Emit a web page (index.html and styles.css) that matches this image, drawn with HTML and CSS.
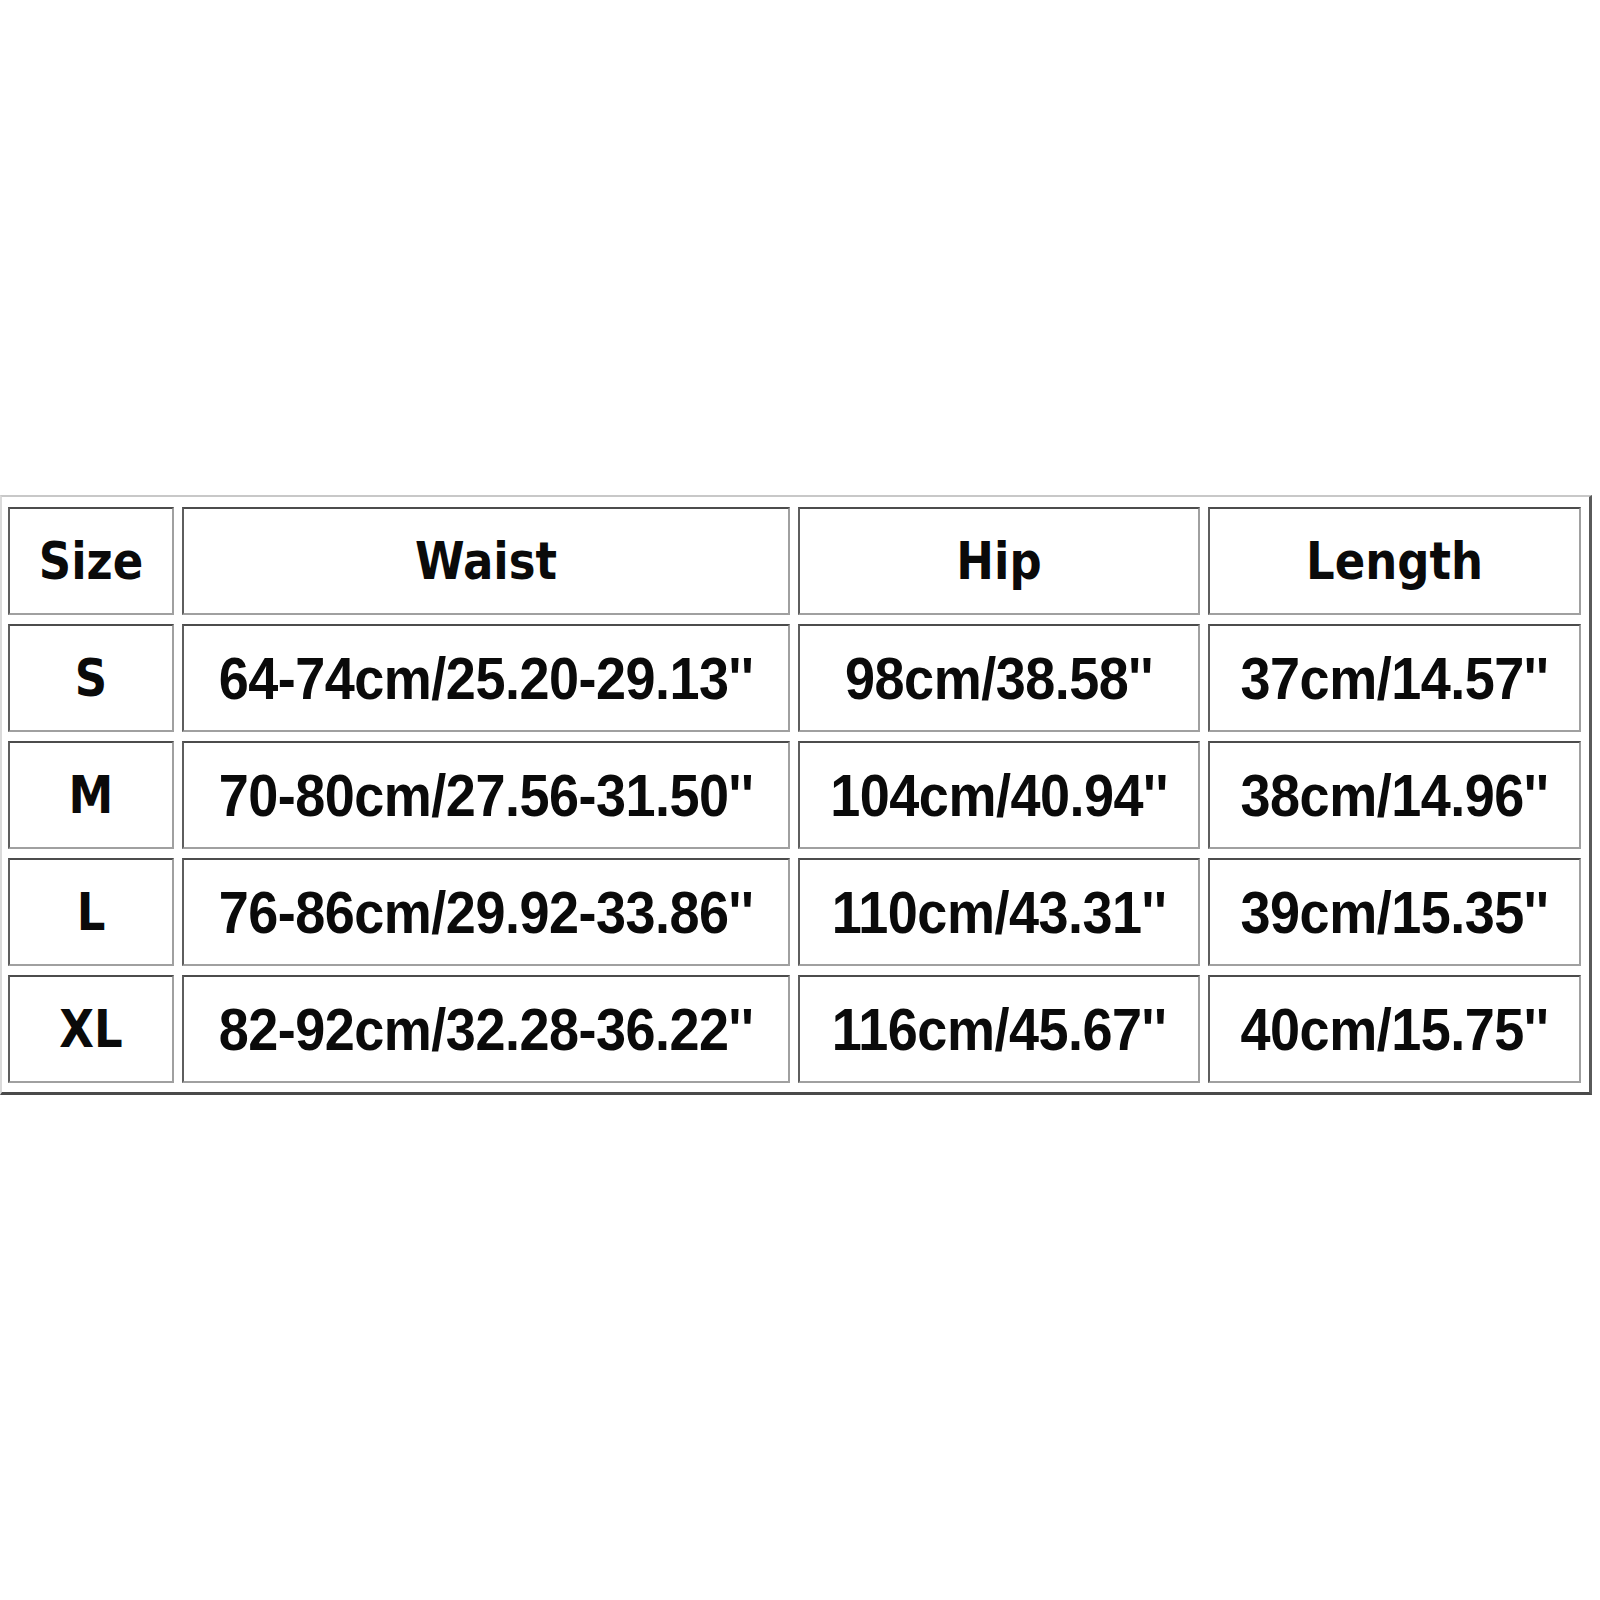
FILE: index.html
```html
<!DOCTYPE html>
<html>
<head>
<meta charset="utf-8">
<link rel="stylesheet" href="styles.css">
</head>
<body>
<div class="page">
  <div class="chart">
    <div class="cell head"><span>Size</span></div>
    <div class="cell head"><span>Waist</span></div>
    <div class="cell head"><span>Hip</span></div>
    <div class="cell head"><span>Length</span></div>

    <div class="cell head"><span>S</span></div>
    <div class="cell"><span>64-74cm/25.20-29.13''</span></div>
    <div class="cell"><span>98cm/38.58''</span></div>
    <div class="cell"><span>37cm/14.57''</span></div>

    <div class="cell head"><span>M</span></div>
    <div class="cell"><span>70-80cm/27.56-31.50''</span></div>
    <div class="cell"><span>104cm/40.94''</span></div>
    <div class="cell"><span>38cm/14.96''</span></div>

    <div class="cell head"><span>L</span></div>
    <div class="cell"><span>76-86cm/29.92-33.86''</span></div>
    <div class="cell"><span>110cm/43.31''</span></div>
    <div class="cell"><span>39cm/15.35''</span></div>

    <div class="cell head"><span>XL</span></div>
    <div class="cell"><span>82-92cm/32.28-36.22''</span></div>
    <div class="cell"><span>116cm/45.67''</span></div>
    <div class="cell"><span>40cm/15.75''</span></div>
  </div>
</div>
</body>
</html>
```

FILE: styles.css
```css
html, body {
  margin: 0;
  padding: 0;
  background: #ffffff;
}

.page {
  padding-top: 495px;
  height: 1105px;
}

.chart {
  width: 1592px;
  box-sizing: border-box;
  display: grid;
  grid-template-columns: 166px 608px 402px 373px;
  grid-auto-rows: 108px;
  column-gap: 8px;
  row-gap: 9px;
  padding: 10px 9px 9px 6px;
  border-style: solid;
  border-width: 2px 3px 3px 2px;
  border-color: #c8c8c8 #5a5a5a #4a4a4a #dadada;
}

.cell {
  box-sizing: border-box;
  display: flex;
  align-items: center;
  justify-content: center;
  border-style: solid;
  border-width: 2px;
  border-color: #4c4c4c #a0a0a0 #a0a0a0 #5e5e5e;
  font-family: "Liberation Sans", Arial, sans-serif;
  font-weight: 700;
  font-size: 54px;
  letter-spacing: -0.5px;
  color: #0a0a0a;
  white-space: nowrap;
}

.cell span {
  display: inline-block;
  transform: scaleY(1.1);
}

.head {
  font-family: "DejaVu Sans", Verdana, sans-serif;
  font-size: 45px;
  letter-spacing: 0;
}

.head span {
  transform: scaleY(1.13);
}
```
